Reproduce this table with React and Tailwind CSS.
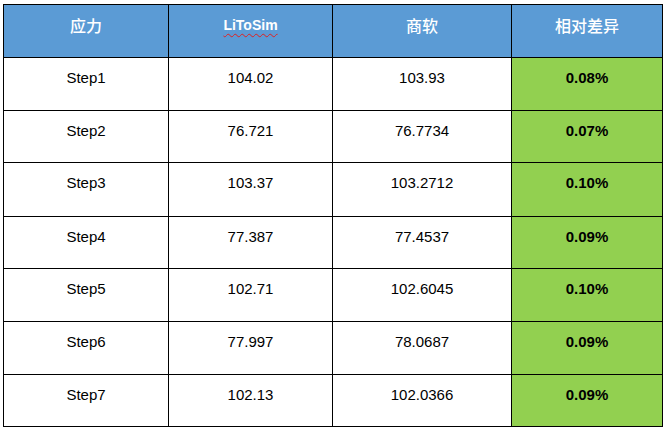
const rows = [
  { step: "Step1", lito: "104.02", comm: "103.93", diff: "0.08%", h: "h-[53px]" },
  { step: "Step2", lito: "76.721", comm: "76.7734", diff: "0.07%", h: "h-[52px]" },
  { step: "Step3", lito: "103.37", comm: "103.2712", diff: "0.10%", h: "h-[54px]" },
  { step: "Step4", lito: "77.387", comm: "77.4537", diff: "0.09%", h: "h-[52px]" },
  { step: "Step5", lito: "102.71", comm: "102.6045", diff: "0.10%", h: "h-[53px]" },
  { step: "Step6", lito: "77.997", comm: "78.0687", diff: "0.09%", h: "h-[53px]" },
  { step: "Step7", lito: "102.13", comm: "102.0366", diff: "0.09%", h: "h-[52px]" },
];

const cell = "border-r border-b border-black text-center pt-[10px] leading-[20px]";

export default function App() {
  return (
    <div className="w-[667px] h-[430px] bg-white pt-[4px] pl-[3px] font-['Liberation_Sans','Noto_Sans_CJK_SC',sans-serif] text-[15px] text-black">
      <div className="grid grid-cols-[165px_164px_179px_151px] w-[660px] border-l border-t border-black">
        {/* header */}
        <div className={`${cell} h-[53px] bg-[#5b9bd5] text-white text-[16px] font-medium font-['Noto_Sans_CJK_SC',sans-serif]`}>应力</div>
        <div className={`${cell} h-[53px] bg-[#5b9bd5] text-white text-[14px] font-bold`}>
          <span className="underline decoration-wavy decoration-[#e02020] decoration-1 underline-offset-[3px]">LiToSim</span>
        </div>
        <div className={`${cell} h-[53px] bg-[#5b9bd5] text-white text-[16px] font-medium font-['Noto_Sans_CJK_SC',sans-serif]`}>商软</div>
        <div className={`${cell} h-[53px] bg-[#5b9bd5] text-white text-[16px] font-medium font-['Noto_Sans_CJK_SC',sans-serif]`}>相对差异</div>

        {rows.map((r) => (
          <div key={r.step} className="contents">
            <div className={`${cell} ${r.h}`}>{r.step}</div>
            <div className={`${cell} ${r.h}`}>{r.lito}</div>
            <div className={`${cell} ${r.h}`}>{r.comm}</div>
            <div className={`${cell} ${r.h} bg-[#92d050] font-bold`}>{r.diff}</div>
          </div>
        ))}
      </div>
    </div>
  );
}
